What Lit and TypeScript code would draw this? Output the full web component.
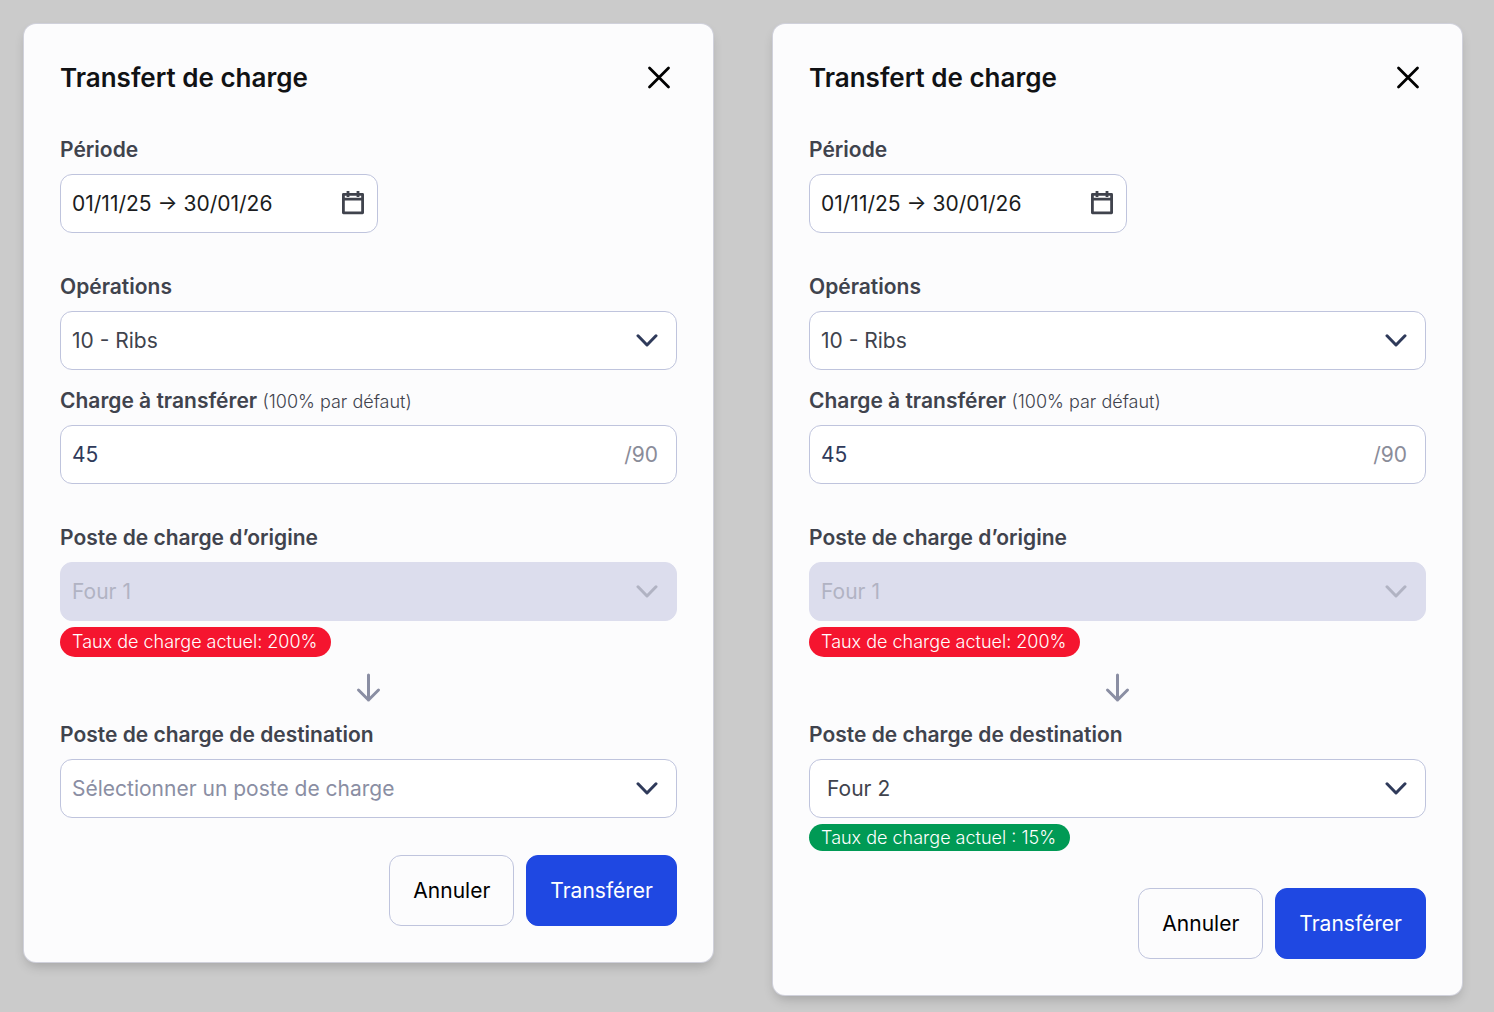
import { LitElement, html, css, svg, nothing } from "lit";
import { customElement, property } from "lit/decorators.js";

const closeIcon = svg`<svg class="icon-close" viewBox="0 0 24 24" aria-hidden="true"><path d="M2.5 2 21.5 21M21.5 2 2.5 21" /></svg>`;
const calendarIcon = svg`<svg class="icon-calendar" viewBox="0 0 24 24" aria-hidden="true"><path d="M2.4 2.4H21.6V20.8H2.4ZM2.4 7.2H21.6M7 -1V5M17 -1V5" /></svg>`;
const chevronIcon = svg`<svg class="icon-chevron" viewBox="0 0 24 14" aria-hidden="true"><path d="M3 1.8 12 11 21 1.8" /></svg>`;
const arrowIcon = svg`<svg class="icon-arrow" viewBox="0 0 26 30" aria-hidden="true"><path d="M12.5 2V27M2.5 17 12.5 27 22.5 17" /></svg>`;

@customElement("transfer-card")
export class TransferCard extends LitElement {
  @property() destination = "";
  @property() rate = "";

  static styles = css`
    :host {
      display: block;
      min-width: 0;
    }
    .card {
      box-sizing: border-box;
      padding: 36px;
      border-radius: 12px;
      background: #fcfcfd;
      box-shadow: 0 0 0 1px #d0d1db, 0 6px 12px -2px rgba(0, 0, 0, 0.2);
      display: flex;
      flex-direction: column;
    }
    .head {
      display: flex;
      align-items: center;
      justify-content: space-between;
      height: 36px;
      margin-bottom: 39px;
    }
    h2 {
      margin: 0;
      font-size: 26px;
      line-height: 36px;
      font-weight: 600;
      color: #111214;
    }
    button,
    input,
    select {
      font: inherit;
      margin: 0;
    }
    .close {
      display: flex;
      padding: 6px;
      border: 0;
      background: none;
      cursor: pointer;
    }
    svg {
      display: block;
      fill: none;
      stroke: currentColor;
      stroke-linecap: round;
      stroke-linejoin: round;
      flex: none;
    }
    .icon-close {
      width: 24px;
      height: 24px;
      stroke: #000;
      stroke-width: 2.8;
    }
    .icon-calendar {
      width: 24px;
      height: 24px;
      color: #40434d;
      stroke-width: 2.8;
      stroke-linecap: butt;
      overflow: visible;
    }
    .icon-chevron {
      width: 24px;
      height: 14px;
      color: #2f3a5a;
      stroke-width: 3;
    }
    .icon-arrow {
      width: 26px;
      height: 30px;
      color: #8a8ea3;
      stroke-width: 3;
    }
    .group {
      display: flex;
      flex-direction: column;
      gap: 16px;
      margin-bottom: 39px;
    }
    .field {
      display: flex;
      flex-direction: column;
      gap: 9px;
    }
    .field.short {
      width: 318px;
      max-width: 100%;
    }
    label {
      line-height: 30px;
      font-weight: 600;
      color: #40434d;
    }
    .hint {
      font-size: 18px;
      line-height: 24px;
      font-weight: 300;
    }
    .control {
      display: grid;
      grid-template-columns: minmax(0, 1fr) auto;
      align-items: center;
      height: 59px;
      box-sizing: border-box;
      border: 1px solid #bfc4dd;
      border-radius: 12px;
      background: #fff;
      color: #40434d;
    }
    .control > * {
      grid-row: 1;
    }
    .control > svg,
    .control > .unit {
      grid-column: 2;
      margin-right: 17px;
      pointer-events: none;
    }
    .control > .icon-calendar {
      margin-right: 12px;
    }
    .control > .unit {
      margin-right: 18px;
      color: #8a8c99;
    }
    input,
    select {
      grid-column: 1 / 3;
      width: 100%;
      height: 57px;
      box-sizing: border-box;
      padding: 0 48px 0 11px;
      border: 0;
      border-radius: 11px;
      background: none;
      color: inherit;
      appearance: none;
      opacity: 1;
    }
    .period {
      color: #1b1c20;
    }
    .amount {
      color: #2f3a5a;
    }
    .placeholder {
      color: #8a8ea3;
    }
    .chosen {
      padding-left: 17px;
    }
    .control.disabled {
      border-color: #dcdded;
      background: #dcdded;
      color: #b1b3c3;
    }
    .control.disabled svg {
      color: #b1b3c3;
    }
    .pill {
      align-self: flex-start;
      margin-top: 6px;
      padding: 0 14px 0 12px;
      border-radius: 15px;
      font-size: 18px;
      font-weight: 300;
      line-height: 30px;
      color: #fff;
    }
    .pill.over {
      background: #f5152f;
    }
    .pill.ok {
      background: #009a55;
      line-height: 27px;
    }
    .flow {
      align-self: center;
      height: 30px;
      margin: 16px 0 17px;
    }
    .actions {
      display: flex;
      justify-content: flex-end;
      gap: 12px;
      margin-top: 37px;
    }
    .action {
      height: 71px;
      padding: 0 23px;
      border: 1px solid #bfc4dd;
      border-radius: 12px;
      background: #fcfcfd;
      color: #000;
      cursor: pointer;
    }
    .action.primary {
      border-color: #1f48e2;
      background: #1f48e2;
      color: #fff;
    }
  `;

  render() {
    return html`
      <section class="card" aria-labelledby="title">
        <header class="head">
          <h2 id="title">Transfert de charge</h2>
          <button class="close" type="button" aria-label="Fermer">${closeIcon}</button>
        </header>

        <div class="group">
          <div class="field short">
            <label for="period">Période</label>
            <div class="control">
              <input id="period" class="period" type="text" .value=${"01/11/25 → 30/01/26"} />
              ${calendarIcon}
            </div>
          </div>
        </div>

        <div class="group">
          <div class="field">
            <label for="operation">Opérations</label>
            <div class="control">
              <select id="operation">
                <option>10 - Ribs</option>
              </select>
              ${chevronIcon}
            </div>
          </div>
          <div class="field">
            <label for="amount">Charge à transférer <span class="hint">(100% par défaut)</span></label>
            <div class="control">
              <input id="amount" class="amount" type="text" inputmode="numeric" .value=${"45"} />
              <span class="unit">/90</span>
            </div>
          </div>
        </div>

        <div class="field">
          <label for="origin">Poste de charge d’origine</label>
          <div class="control disabled">
            <select id="origin" disabled>
              <option>Four 1</option>
            </select>
            ${chevronIcon}
          </div>
        </div>
        <span class="pill over">Taux de charge actuel: 200%</span>

        <div class="flow">${arrowIcon}</div>

        <div class="field">
          <label for="destination">Poste de charge de destination</label>
          <div class="control">
            <select id="destination" class=${this.destination ? "chosen" : "placeholder"}>
              <option>${this.destination || "Sélectionner un poste de charge"}</option>
            </select>
            ${chevronIcon}
          </div>
        </div>
        ${this.rate ? html`<span class="pill ok">Taux de charge actuel : ${this.rate}</span>` : nothing}

        <footer class="actions">
          <button class="action" type="button">Annuler</button>
          <button class="action primary" type="button">Transférer</button>
        </footer>
      </section>
    `;
  }
}

@customElement("app-root")
export class AppRoot extends LitElement {
  static styles = css`
    :host {
      display: block;
      box-sizing: border-box;
      min-height: 100vh;
      padding: 24px 32px 17px 24px;
      background: #cbcbcb;
      font-family: Inter, "Liberation Sans", sans-serif;
      font-size: 21px;
      font-weight: 400;
    }
    .board {
      display: grid;
      grid-template-columns: repeat(2, minmax(0, 1fr));
      align-items: start;
      gap: 60px;
    }
  `;

  render() {
    return html`
      <main class="board">
        <transfer-card></transfer-card>
        <transfer-card destination="Four 2" rate="15%"></transfer-card>
      </main>
    `;
  }
}
